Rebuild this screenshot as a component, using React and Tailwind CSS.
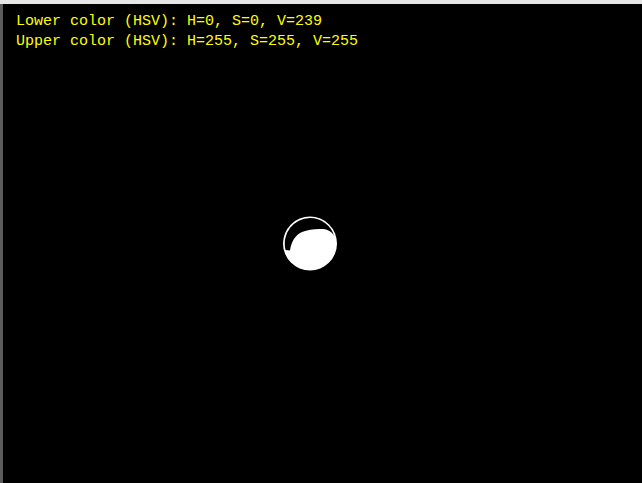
export default function App() {
  return (
    <div className="flex flex-col w-[642px] h-[483px] bg-black overflow-hidden">
      {/* window title edge */}
      <div className="h-[4px] bg-[#e6e6e6] shrink-0" />
      <div className="flex flex-1">
        <div className="w-[3px] bg-[#5c5c5c] shrink-0" />
        <div className="relative flex-1 bg-black">
          <div className="pt-[8px] pl-[13px] font-['Liberation_Mono',monospace] text-[15px] leading-[20px] text-[#ffff00]">
            <div>Lower color (HSV): H=0, S=0, V=239</div>
            <div>Upper color (HSV): H=255, S=255, V=255</div>
          </div>
          {/* mask blob, viewBox in page coordinates */}
          <svg className="absolute left-[275px] top-[207px]" width="64" height="64" viewBox="278 211 64 64">
            <circle cx="310" cy="243.5" r="27" fill="#ffffff" />
            <path
              d="M285.6 250 A25.5 25.5 0 0 1 310 218 A25.5 25.5 0 0 1 334.2 236 C332 232 328.5 229.5 323 229 C316 228.5 308 229.5 302 232 C295.5 235 291.5 241 290 250.5 Z"
              fill="#000000"
            />
          </svg>
        </div>
      </div>
    </div>
  );
}
